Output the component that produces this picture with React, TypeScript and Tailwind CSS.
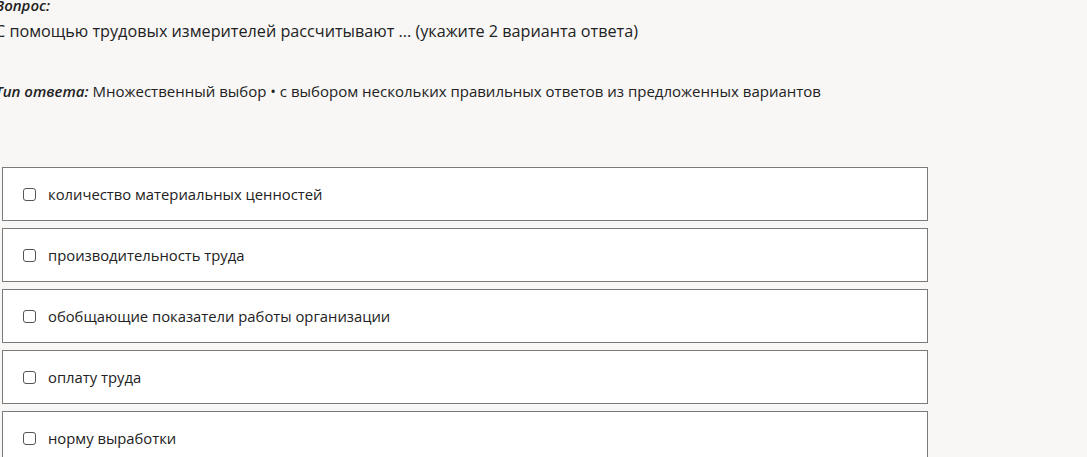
import React from "react";

const options = [
  "количество материальных ценностей",
  "производительность труда",
  "обобщающие показатели работы организации",
  "оплату труда",
  "норму выработки",
];

export default function App() {
  return (
    <div
      className="min-h-screen bg-[#f8f7f6] text-[#222] overflow-hidden"
      style={{ fontFamily: '"Open Sans", "Noto Sans", sans-serif' }}
    >
      <div className="ml-[-5px] pt-0 text-[15px] leading-[26px]">
        <div className="mt-[-8px] font-semibold italic">Вопрос:</div>
        <div className="text-[16.2px]">С помощью трудовых измерителей рассчитывают ... (укажите 2 варианта ответа)</div>
        <div className="mt-[34px]">
          <span className="font-semibold italic">Тип ответа:</span> Множественный выбор • с выбором нескольких правильных ответов из предложенных вариантов
        </div>
      </div>
      <div className="ml-[2px] mt-[63px] w-[926px] flex flex-col gap-[7px]">
        {options.map((o) => (
          <div
            key={o}
            className="h-[54px] border border-[#7a7a7a] bg-white flex items-center pl-[20px]"
          >
            <span className="w-[13px] h-[13px] border border-[#555] rounded-[3px] bg-white shrink-0 mt-[1px]" />
            <span className="ml-[12px] text-[14.8px] text-[#222] mt-[1px]">{o}</span>
          </div>
        ))}
      </div>
    </div>
  );
}
